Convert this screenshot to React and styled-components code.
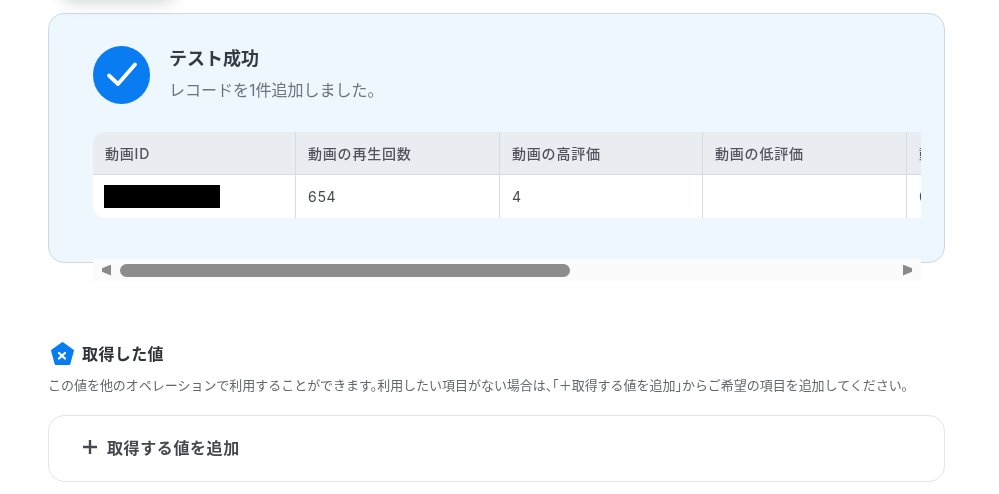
import React from 'react'
import styled, { createGlobalStyle } from 'styled-components'

const GlobalStyle = createGlobalStyle`
    html, body {
        margin: 0;
        padding: 0;
        background: #ffffff;
        font-family: Inter, "Noto Sans CJK JP", sans-serif;
        overflow: hidden;
    }
`

const Page = styled.div`
    position: relative;
    width: 999px;
    height: 494px;
    padding: 13px 54px 0 48px;
    box-sizing: border-box;
    overflow: hidden;
    will-change: transform;
`

const TopShadow = styled.div`
    position: absolute;
    left: 62px;
    top: -24px;
    width: 112px;
    height: 24px;
    border-radius: 12px;
    box-shadow: 0 2px 16px rgba(40, 50, 60, 0.22);
`

const ResultCard = styled.section`
    box-sizing: border-box;
    height: 250px;
    padding: 32px 23px 0 44px;
    background: #eef6fe;
    border: 1px solid #cfd8e2;
    border-radius: 16px;
`

const Summary = styled.div`
    display: flex;
    align-items: center;
    gap: 19px;
    height: 58px;
`

const CheckBadge = styled.div`
    display: flex;
    align-items: center;
    justify-content: center;
    align-self: flex-start;
    width: 57px;
    height: 57.5px;
    border-radius: 50%;
    background: #0a7cf2;
`

const SummaryText = styled.div`
    display: flex;
    flex-direction: column;
    gap: 8px;
    padding-bottom: 2px;
`

const SummaryTitle = styled.div`
    font-size: 18px;
    line-height: 24px;
    font-weight: 700;
    color: #363a42;
`

const SummaryNote = styled.div`
    font-size: 16px;
    line-height: 22px;
    color: #6f747c;
`

const TableClip = styled.div`
    margin-top: 28px;
    width: 828px;
    overflow: hidden;
    border-radius: 12px 0 0 12px;
`

const Row = styled.div`
    display: grid;
    grid-template-columns: 203px 204px 203px 204px 203px;
    height: ${(p) => p.$h}px;
    background: ${(p) => p.$bg};
    box-sizing: border-box;
    border-bottom: ${(p) => (p.$head ? '1px solid #d5dbe3' : 'none')};
`

const Cell = styled.div`
    display: flex;
    align-items: center;
    box-sizing: border-box;
    padding-left: 12px;
    border-right: 1px solid #d5dbe3;
    font-size: 14px;
    letter-spacing: ${(p) => (p.$head ? '0.8px' : '0.7px')};
    white-space: nowrap;
    overflow: hidden;
    font-weight: ${(p) => (p.$head ? 500 : 400)};
    color: ${(p) => (p.$head ? '#50555d' : '#45494f')};
`

const Redacted = styled.div`
    width: 116px;
    height: 23px;
    margin-left: -1px;
    background: #000000;
`

const ScrollTrack = styled.div`
    display: flex;
    align-items: center;
    width: 828px;
    height: 22px;
    margin-top: 41px;
    background: #fbfbfc;
`

const Arrow = styled.div`
    width: 9px;
    height: 11px;
    background: #8a8a8a;
    margin-left: ${(p) => (p.$right ? '333px' : '9px')};
    clip-path: ${(p) =>
        p.$right
            ? 'polygon(0 0, 100% 35%, 100% 65%, 0 100%)'
            : 'polygon(0 35%, 100% 0, 100% 100%, 0 65%)'};
`

const Thumb = styled.div`
    width: 450px;
    height: 13px;
    margin-left: 9px;
    border-radius: 7px;
    background: #8c8c8c;
`

const ValuesHead = styled.div`
    display: flex;
    align-items: center;
    gap: 6px;
    margin-top: 77px;
    height: 28px;
`

const ValuesTitle = styled.h2`
    margin: 0;
    font-size: 16px;
    line-height: 24px;
    font-weight: 700;
    letter-spacing: 0.4px;
    color: #2f3238;
`

const ValuesNote = styled.p`
    margin: 8px 0 0;
    font-size: 13px;
    line-height: 18px;
    letter-spacing: -0.03px;
    color: #62676e;
    white-space: nowrap;
    font-feature-settings: "halt";
`

const AddPanel = styled.div`
    display: flex;
    align-items: center;
    gap: 9px;
    box-sizing: border-box;
    height: 67px;
    margin-top: 21px;
    padding: 0 0 3px 33px;
    border: 1px solid #e3e5e8;
    border-radius: 16px;
    font-size: 16px;
    letter-spacing: 0.6px;
    font-weight: 700;
    color: #45494f;
`

const columns = ['動画ID', '動画の再生回数', '動画の高評価', '動画の低評価', '動画の']

export default function App() {
    return (
        <>
            <GlobalStyle />
            <Page>
                <TopShadow />
                <ResultCard>
                    <Summary>
                        <CheckBadge>
                            <svg width="34" height="34" viewBox="0 0 34 34" fill="none">
                                <path
                                    d="M4 17.5 L13 26 L30 6.5"
                                    stroke="#ffffff"
                                    strokeWidth="3.8"
                                    strokeLinecap="round"
                                    strokeLinejoin="round"
                                />
                            </svg>
                        </CheckBadge>
                        <SummaryText>
                            <SummaryTitle>テスト成功</SummaryTitle>
                            <SummaryNote>レコードを1件追加しました。</SummaryNote>
                        </SummaryText>
                    </Summary>
                    <TableClip>
                        <Row $head $h={43} $bg="#e9ecf1">
                            {columns.map((c) => (
                                <Cell $head key={c}>{c}</Cell>
                            ))}
                        </Row>
                        <Row $h={43} $bg="#ffffff">
                            <Cell><Redacted /></Cell>
                            <Cell>654</Cell>
                            <Cell>4</Cell>
                            <Cell />
                            <Cell>0</Cell>
                        </Row>
                    </TableClip>
                    <ScrollTrack>
                        <Arrow />
                        <Thumb />
                        <Arrow $right />
                    </ScrollTrack>
                </ResultCard>
                <ValuesHead>
                    <svg width="28" height="28" viewBox="0 0 28 28">
                        <path
                            d="M14.5 3 L25 10.5 L21.3 24 L7.7 24 L4 10.5 Z"
                            fill="#0a7cf2"
                            stroke="#0a7cf2"
                            strokeWidth="2"
                            strokeLinejoin="round"
                        />
                        <path
                            d="M11 13 L17 18.5 M17 13 L11 18.5"
                            stroke="#ffffff"
                            strokeWidth="2.2"
                            strokeLinecap="round"
                        />
                    </svg>
                    <ValuesTitle>取得した値</ValuesTitle>
                </ValuesHead>
                <ValuesNote>
                    この値を他のオペレーションで利用することができます。利用したい項目がない場合は、「＋取得する値を追加」からご希望の項目を追加してください。
                </ValuesNote>
                <AddPanel>
                    <svg width="16" height="16" viewBox="0 0 16 16">
                        <path d="M8 1 V15 M1 8 H15" stroke="#45494f" strokeWidth="2.4" />
                    </svg>
                    取得する値を追加
                </AddPanel>
            </Page>
        </>
    )
}
